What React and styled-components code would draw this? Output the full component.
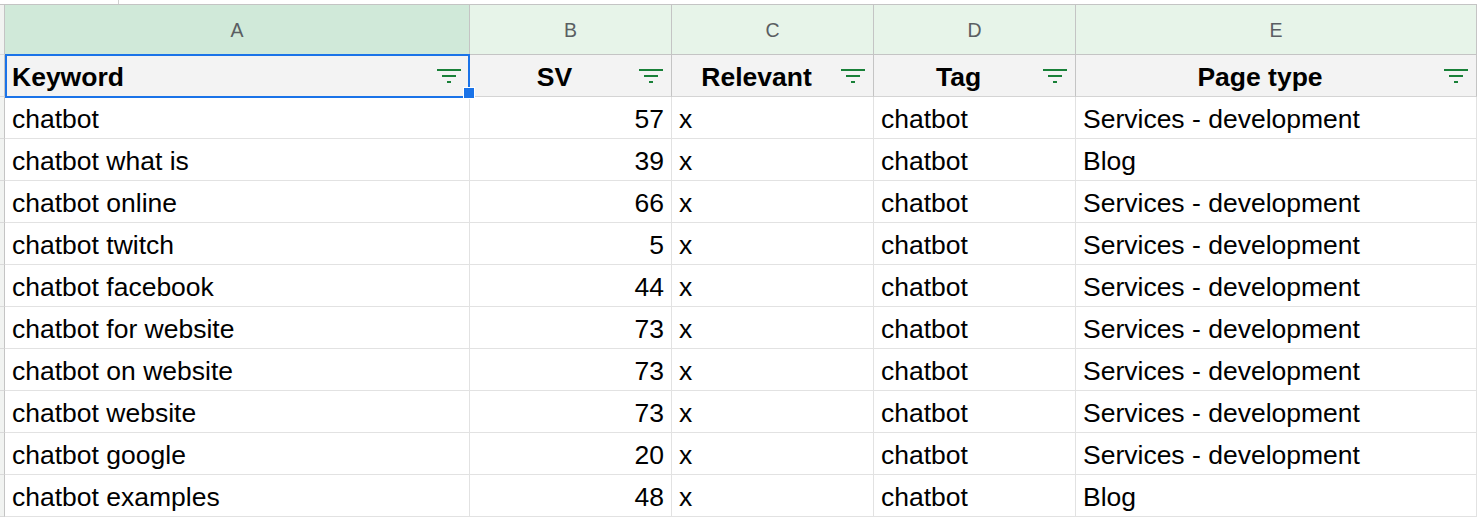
import styled, { createGlobalStyle } from "styled-components";

const GlobalStyle = createGlobalStyle`
    html, body {
        margin: 0;
        padding: 0;
        background: #fff;
        overflow: hidden;
    }
    body {
        font-family: "Liberation Sans", Arial, sans-serif;
    }
`;

const columns = [
    { letter: "A", title: "Keyword", align: "left", num: false },
    { letter: "B", title: "SV", align: "center", num: true },
    { letter: "C", title: "Relevant", align: "center", num: false },
    { letter: "D", title: "Tag", align: "center", num: false },
    { letter: "E", title: "Page type", align: "center", num: false },
];

const rows = [
    ["chatbot", 57, "x", "chatbot", "Services - development"],
    ["chatbot what is", 39, "x", "chatbot", "Blog"],
    ["chatbot online", 66, "x", "chatbot", "Services - development"],
    ["chatbot twitch", 5, "x", "chatbot", "Services - development"],
    ["chatbot facebook", 44, "x", "chatbot", "Services - development"],
    ["chatbot for website", 73, "x", "chatbot", "Services - development"],
    ["chatbot on website", 73, "x", "chatbot", "Services - development"],
    ["chatbot website", 73, "x", "chatbot", "Services - development"],
    ["chatbot google", 20, "x", "chatbot", "Services - development"],
    ["chatbot examples", 48, "x", "chatbot", "Blog"],
];

function FilterIcon() {
    return (
        <FilterSvg width="24" height="16" viewBox="0 0 24 16">
            <line x1="0" y1="2" x2="24" y2="2" />
            <line x1="5" y1="8" x2="19" y2="8" />
            <line x1="10" y1="14" x2="14" y2="14" />
        </FilterSvg>
    );
}

function App() {
    return (
        <>
            <GlobalStyle />
            <TopStrip>
                <TopDivider />
            </TopStrip>
            <Sheet>
                <Gutter />
                {columns.map((c, i) => (
                    <ColHeader key={c.letter} $selected={i === 0}>{c.letter}</ColHeader>
                ))}

                <Gutter />
                {columns.map((c) => (
                    <FieldCell key={c.title}>
                        <FieldLabel $align={c.align}>{c.title}</FieldLabel>
                        <FilterIcon />
                    </FieldCell>
                ))}

                {rows.map((r, ri) => (
                    <Row key={ri}>
                        <Gutter />
                        {r.map((v, ci) => (
                            <Cell key={ci} $num={columns[ci].num}>{v}</Cell>
                        ))}
                    </Row>
                ))}

                <Selection />
                <Handle />
            </Sheet>
        </>
    );
}

const TopStrip = styled.div`
    height: 5px;
    box-sizing: border-box;
    border-bottom: 1px solid #c4c4c4;
    display: flex;
`;

const TopDivider = styled.div`
    margin-left: 118px;
    width: 1px;
    background: #d0d0d0;
`;

const Sheet = styled.div`
    position: relative;
    display: grid;
    grid-template-columns: 5px 465px 202px 202px 202px 1fr;
    grid-auto-rows: 42px;
    grid-template-rows: 50px 42px;
`;

const Row = styled.div`
    display: contents;
`;

const Gutter = styled.div`
    background: #f1f3f1;
    box-sizing: border-box;
    border-right: 1px solid #c4c4c4;
    border-bottom: 1px solid #dadada;
`;

const ColHeader = styled.div`
    display: flex;
    align-items: center;
    justify-content: center;
    box-sizing: border-box;
    background: ${(p) => (p.$selected ? "#d0e9d9" : "#e7f4e9")};
    border-right: 1px solid #c4c4c4;
    border-bottom: 1px solid #c4c4c4;
    color: #5a5e62;
    font-size: 19.5px;
    padding-top: 2px;
`;

const FieldCell = styled.div`
    display: flex;
    align-items: center;
    box-sizing: border-box;
    background: #f3f3f3;
    border-right: 1px solid #c4c4c4;
    border-bottom: 1px solid #d4d4d4;
`;

const FieldLabel = styled.div`
    flex: 1;
    text-align: ${(p) => p.$align};
    padding-left: ${(p) => (p.$align === "left" ? "7px" : "0")};
    padding-top: 4px;
    font-size: 26.5px;
    font-weight: 700;
    color: #000;
    white-space: nowrap;
`;

const FilterSvg = styled.svg`
    flex: none;
    margin-right: 8px;
    margin-top: 1px;
    stroke: #188038;
    stroke-width: 2;
`;

const Cell = styled.div`
    display: flex;
    align-items: center;
    justify-content: ${(p) => (p.$num ? "flex-end" : "flex-start")};
    box-sizing: border-box;
    padding: 3px 7px 0;
    border-right: 1px solid #e2e2e2;
    border-bottom: 1px solid #e2e2e2;
    font-size: 26.5px;
    color: #000;
    white-space: nowrap;
    overflow: hidden;
`;

const Selection = styled.div`
    position: absolute;
    left: 5px;
    top: 49px;
    width: 465px;
    height: 44px;
    box-sizing: border-box;
    border: 2px solid #1a73e8;
    pointer-events: none;
`;

const Handle = styled.div`
    position: absolute;
    left: 463px;
    top: 82px;
    width: 12px;
    height: 12px;
    box-sizing: border-box;
    background: #1a73e8;
    border: 1px solid #fff;
`;

export default App;
